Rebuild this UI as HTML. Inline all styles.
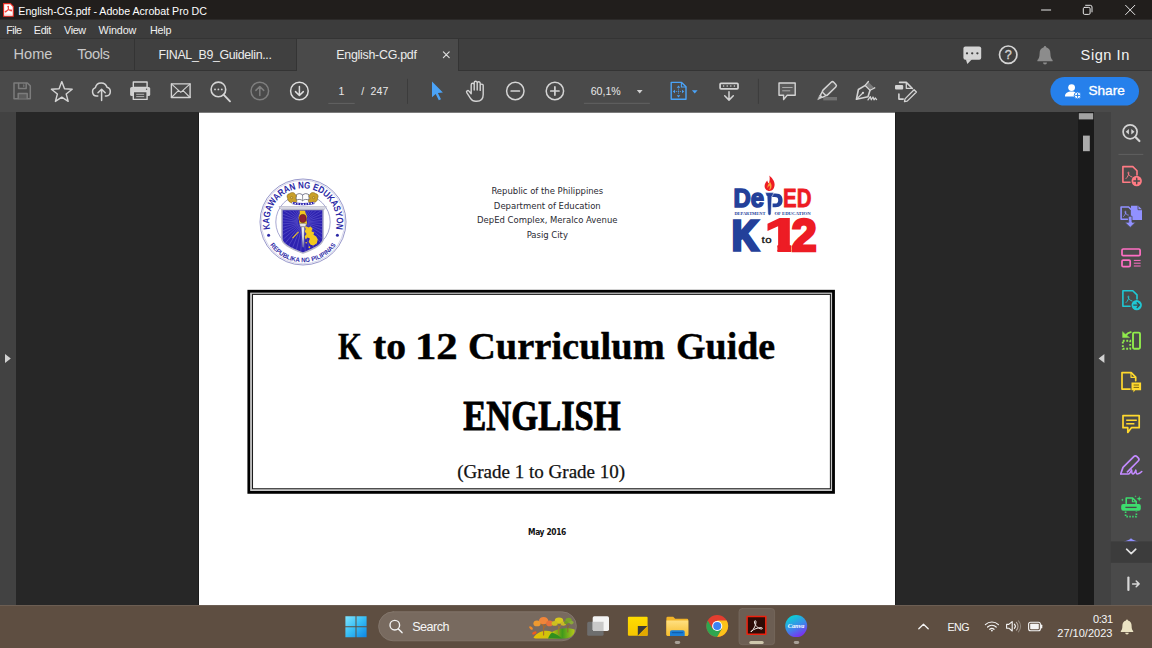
<!DOCTYPE html>
<html lang="en"><head><meta charset="utf-8"><title>English-CG.pdf - Adobe Acrobat Pro DC</title>
<style>
*{box-sizing:border-box;margin:0;padding:0}
html,body{width:1152px;height:648px;overflow:hidden;background:#282828}
body{position:relative;font-family:"Liberation Sans",sans-serif;color:#e6e6e6}
.abs{position:absolute}
.t{position:absolute;white-space:nowrap;line-height:1}
svg{position:absolute;overflow:visible}
/* title bar */
#titlebar{left:0;top:0;width:1152px;height:20px;background:#211e1c;border-bottom:1px solid #2c2a29}
#menubar{left:0;top:20px;width:1152px;height:18px;background:#3c3c3c}
#tabrow{left:0;top:38px;width:1152px;height:33px;background:#404040;border-top:1px solid #343434;border-bottom:1px solid #343434}
#toolbar{left:0;top:71px;width:1152px;height:41px;background:#4a4a4a}
#docbg{left:0;top:112px;width:1152px;height:493px;background:#272727}
#leftstrip{left:0;top:112px;width:16px;height:493px;background:#424242}
#page{left:199px;top:112.7px;width:696px;height:492px;background:#fff;box-shadow:-1px 0 0 #1c1c1c,1px 0 0 #1c1c1c}
#scroll{left:1078px;top:112px;width:16px;height:493px;background:#1a1a1a}
#rstrip{left:1094px;top:112px;width:17px;height:493px;background:#424242}
#rpanel{left:1111px;top:112px;width:41px;height:493px;background:#4a4a4a}
#taskbar{left:0;top:605px;width:1152px;height:43px;background:#5e4e41}

#titletext{left:18.3px;top:5.9px;font-size:10.65px;color:#fff}
.menu{top:24.5px;font-size:10.8px;color:#f0f0f0}
.nav{top:46.5px;font-size:14.6px;color:#c9c9c9}
.tabtxt{top:48.6px;font-size:12.4px;color:#ececec}
#tab1{left:134px;top:39px;width:163px;height:31px;background:#404040;border-left:1px solid #343434;border-right:1px solid #343434}
#tab2{left:297px;top:39px;width:161px;height:32px;background:#4a4a4a}
#tabrest{left:458px;top:39px;width:694px;height:31px;background:#3f3f3f;border-left:1px solid #343434}
.tb{top:85.5px;font-size:10.6px;color:#e8e8e8}

.doc{font-family:"DejaVu Sans Condensed","DejaVu Sans",sans-serif;font-stretch:condensed;color:#2a2a32;font-size:9.42px;text-align:center;width:300px;left:397.3px}
#boxo{left:247.5px;top:290px;width:587.5px;height:203.5px;border:2.8px solid #000}
#boxi{left:251.8px;top:294px;width:579px;height:195.3px;border:1px solid #222}
.ser{font-family:"Liberation Serif",serif;color:#000;text-align:center;left:199px;width:696px}
#t1{top:327px;left:0;width:1152px;height:40px;font-size:38.5px;font-weight:bold;-webkit-text-stroke:.45px #000;text-align:left}
#t1 .w{position:absolute;top:0;transform-origin:0 0;white-space:nowrap}
#t2{top:394.5px;left:193.5px;font-size:42px;font-weight:bold;transform:scaleX(.822);transform-origin:348px 0;-webkit-text-stroke:.9px #000}
#t3{top:462.3px;left:193.2px;font-size:19.05px;color:#111;-webkit-text-stroke:.25px #111}
#may{font-family:"DejaVu Sans Condensed","DejaVu Sans",sans-serif;font-stretch:condensed;font-weight:bold;font-size:8.4px;color:#111;left:447px;width:200px;text-align:center;top:527.5px;letter-spacing:-.35px}

#signin{left:1080.6px;top:48.2px;font-size:14.6px;color:#f4f4f4;letter-spacing:.55px}
#share{left:1088.4px;top:84.1px;font-size:13.6px;color:#fff;-webkit-text-stroke:.35px #fff;letter-spacing:.05px;z-index:3}
.tk{color:#f6f6f6}
</style></head><body>
<div id="titlebar" class="abs"></div>
<div id="menubar" class="abs"></div>
<div id="tabrow" class="abs"></div>
<div id="toolbar" class="abs"></div>
<div id="docbg" class="abs"></div>
<div id="leftstrip" class="abs"></div>
<div class="abs" style="left:199px;top:112px;width:696px;height:1px;background:#7c7c7c"></div><div id="page" class="abs"></div>

<div class="t doc" style="top:186.2px">Republic of the Philippines</div>
<div class="t doc" style="top:200.7px">Department of Education</div>
<div class="t doc" style="top:215.1px">DepEd Complex, Meralco Avenue</div>
<div class="t doc" style="top:229.5px">Pasig City</div>
<svg id="seal" width="100" height="100" viewBox="253 171.8 100 100" style="left:253px;top:171.8px" fill="none">
<defs><path id="arcT" d="M271.43 233.29A33.6 33.6 0 1 1 334.57 233.29"/><path id="arcB" d="M268.10 241.95A40.3 40.3 0 0 0 337.90 241.95"/>
<clipPath id="shc"><path d="M282.7 210.2H322.3V238.6C322.3 244 312.2 248.8 302.9 252.1C293.6 248.8 282.7 244 282.7 238.6Z"/></clipPath></defs>
<circle cx="303.0" cy="221.8" r="43" fill="#fff" stroke="#6d6db4" stroke-width=".7"/>
<circle cx="303.0" cy="221.8" r="41.7" stroke="#9a9acc" stroke-width=".4"/>
<circle cx="303.0" cy="221.8" r="27.2" stroke="#6d6db4" stroke-width=".6"/>
<text font-family="Liberation Sans, sans-serif" font-weight="bold" font-size="9.5" fill="#2b29a6"><textPath href="#arcT" startOffset="50%" text-anchor="middle" textLength="120" lengthAdjust="spacingAndGlyphs">KAGAWARAN NG EDUKASYON</textPath></text>
<text font-family="Liberation Sans, sans-serif" font-weight="bold" font-size="6.4" fill="#2b29a6"><textPath href="#arcB" startOffset="50%" text-anchor="middle" textLength="77" lengthAdjust="spacingAndGlyphs">REPUBLIKA NG PILIPINAS</textPath></text>
<circle cx="268.6" cy="235.0" r="1.5" fill="#2b29a6"/><circle cx="337.4" cy="235.0" r="1.5" fill="#2b29a6"/>
<!-- shield -->
<path d="M279 206.4H326.4L324.2 209.4H281.2Z" fill="#dcdce6" stroke="#9c9cb4" stroke-width=".5" stroke-linejoin="round"/>
<path d="M281.9 209.4H323.1V238.6C323.1 244.6 312.6 249.4 302.9 252.9C293.2 249.4 281.9 244.6 281.9 238.6Z" fill="#2d22b0" stroke="#b4b4c8" stroke-width="1.5" stroke-linejoin="round"/>
<g clip-path="url(#shc)"><path d="M307.8 222.3L338.7 224.5M307.7 223.1L337.9 230.1M307.4 223.9L336.2 235.5M307.1 224.6L333.7 240.5M306.6 225.2L330.4 245.1M306.1 225.8L326.4 249.2M305.4 226.2L321.9 252.5M304.8 226.6L316.9 255.1M304.0 226.9L311.5 256.9M303.2 227.0L305.9 257.9M302.5 227.0L300.3 257.9M301.7 226.9L294.7 257.1M300.9 226.6L289.3 255.4M300.2 226.3L284.3 252.9M299.6 225.8L279.7 249.6M299.0 225.3L275.6 245.6M298.6 224.6L272.3 241.1M298.2 224.0L269.7 236.1M297.9 223.2L267.9 230.7M297.8 222.4L266.9 225.1M297.8 221.7L266.9 219.5M297.9 220.9L267.7 213.9M298.2 220.1L269.4 208.5M298.5 219.4L271.9 203.5M299.0 218.8L275.2 198.9M299.5 218.2L279.2 194.8M300.2 217.8L283.7 191.5M300.8 217.4L288.7 188.9M301.6 217.1L294.1 187.1M302.4 217.0L299.7 186.1M303.1 217.0L305.3 186.1M303.9 217.1L310.9 186.9M304.7 217.4L316.3 188.6M305.4 217.7L321.3 191.1M306.0 218.2L325.9 194.4M306.6 218.7L330.0 198.4M307.0 219.4L333.3 202.9M307.4 220.0L335.9 207.9M307.7 220.8L337.7 213.3M307.8 221.6L338.7 218.9" stroke="#7d76de" stroke-width=".4"/>
<path d="M299.6 209.8H304.8L305.6 213L307 216L306.4 220L307.2 223.4L305.8 226L308.6 227.4L310.6 226.4L312.6 228.6L311.4 231L314.2 232.4L313.4 234.6L316.2 236.2L317.8 239.4L316.8 243L313.6 245.4L310.6 244.6L308.6 241.6L310 238.4L307.4 237.4L305.6 239.2L304.6 236.2L306.6 233.8L304.8 231.4L305.8 228.6L304.2 226.6H300.6L299.2 222L298.6 217L299.8 213.4Z" fill="#f2c81e"/>
<path d="M298.2 231.2L298.9 232L292.9 238.2L292.1 237.6Z" fill="#f2c81e"/>
<circle cx="309.4" cy="247" r=".9" fill="#f2c81e"/><circle cx="306.2" cy="242.6" r=".8" fill="#f2c81e"/>
</g>
<path d="M299.3 223.2H306.4L305.4 226.6H300.3Z" fill="#e4e4ec" stroke="#4e4e70" stroke-width=".4"/>
<path d="M301.2 226.6H304.6L303.5 246.4Q303.1 248 302.7 246.4Z" fill="#ededf2" stroke="#4e4e70" stroke-width=".4"/>
<ellipse cx="302.8" cy="218.3" rx="3.4" ry="4.1" fill="#8e2230" stroke="#3e1018" stroke-width=".5"/>
<!-- book, dolphins, rope --><g transform="translate(0 2)">
<path d="M296.2 198V192.6C298.6 190.8 301.2 191.2 302.6 193C304 191.2 306.6 190.8 309 192.6V198C306.6 196.8 304 197 302.6 198.6C301.2 197 298.6 196.8 296.2 198Z" fill="#fff" stroke="#333348" stroke-width=".6" stroke-linejoin="round"/>
<path d="M302.6 193V198.6" stroke="#333348" stroke-width=".5"/>
<g fill="#c9a02a" stroke="#6e5212" stroke-width=".45" stroke-linejoin="round">
<path d="M296.2 200.4C291.6 201.6 287.4 199.6 287.6 196C286.4 194.4 287.2 191.6 289.6 191.4C291.2 189.8 294.6 190 295.4 192.4C296.8 193.2 296.6 195.2 295 195.8C296.4 197 297.4 199 296.2 200.4Z"/>
<path d="M309 200.4C313.6 201.6 317.8 199.6 317.6 196C318.8 194.4 318 191.6 315.6 191.4C314 189.8 310.6 190 309.8 192.4C308.4 193.2 308.6 195.2 310.2 195.8C308.8 197 307.8 199 309 200.4Z"/>
</g>
<circle cx="291.6" cy="195.4" r="1.1" fill="#e2c060" stroke="#6e5212" stroke-width=".4"/><circle cx="313.6" cy="195.4" r="1.1" fill="#e2c060" stroke="#6e5212" stroke-width=".4"/>
<path d="M292 200.6Q303 203.4 314.4 200.6" stroke="#2a20b2" stroke-width="2.3"/>
<path d="M292 200.6Q303 203.4 314.4 200.6" stroke="#fff" stroke-width="1.4" stroke-dasharray="1.2 1.5"/>
</g>
</svg>
<svg id="deped" width="100" height="90" viewBox="725 170 100 90" style="left:725px;top:170px" fill="none">
<text x="733.6" y="207.2" font-family="Liberation Sans, sans-serif" font-weight="bold" font-size="26" fill="#23409a" stroke="#23409a" stroke-width="1.5" textLength="30.6" lengthAdjust="spacingAndGlyphs">De</text>
<path d="M772 193.4H775.4C781.6 193.4 782.6 197 782.6 200.2C782.6 204.2 780.6 207.2 775.6 207.2H772.6V203.6H774.8C777.4 203.6 778.2 202.2 778.2 200.2C778.2 198.2 777.4 197 774.8 197H772Z" fill="#23409a"/>
<text x="783" y="207.2" font-family="Liberation Sans, sans-serif" font-weight="bold" font-size="26.5" fill="#ed1c24" stroke="#ed1c24" stroke-width=".8" textLength="28.4" lengthAdjust="spacingAndGlyphs">ED</text>
<!-- torch -->
<path d="M765.4 192.6H773.6L772.6 196H771.9L771 214.6Q769.5 216 768 214.6L767.1 196H766.4Z" fill="#23409a" stroke="#fff" stroke-width=".5"/>
<path d="M769.3 175.6C771.8 178 774.6 180.6 774.6 184.6C774.6 188.4 772.4 191 769.6 191C766.6 191 764.6 188.8 764.6 186C764.6 183.6 766 182 767.2 180.4C767.6 182 768.2 182.8 768.8 183.2C769.8 181 770 178.4 769.3 175.6Z" fill="#ed1c24"/>
<path d="M769.6 181.6C771 183.4 772 185 771.4 187.4C771 188.8 770 189.8 769 189.8C770 188.4 770.2 187 769.4 185.6C768.8 186.6 768 187.2 767.6 188.2C767.2 186.4 767.8 185 768.6 184C769.2 183.2 769.6 182.6 769.6 181.6Z" fill="#f8a13a"/>
<text x="734.4" y="214.7" font-family="Liberation Serif, serif" font-weight="bold" font-size="4.3" fill="#23409a" textLength="31" lengthAdjust="spacingAndGlyphs">DEPARTMENT</text>
<text x="774.4" y="214.7" font-family="Liberation Serif, serif" font-weight="bold" font-size="4.3" fill="#23409a" textLength="36.2" lengthAdjust="spacingAndGlyphs">OF EDUCATION</text>
<text x="731.9" y="250.2" font-family="Liberation Sans, sans-serif" font-weight="bold" font-size="42.6" fill="#23409a" stroke="#23409a" stroke-width="3.6" stroke-linejoin="miter" textLength="26.2" lengthAdjust="spacingAndGlyphs">K</text>
<text x="761.6" y="243" font-family="Liberation Serif, serif" font-size="10.8" fill="#111" stroke="#111" stroke-width=".3" textLength="10" lengthAdjust="spacingAndGlyphs">to</text>
<clipPath id="c1"><path d="M760 210H791.2V254H777.4V243H760Z"/></clipPath><g clip-path="url(#c1)"><text transform="translate(764.6 250.6) scale(1.42 1)" font-family="Liberation Sans, sans-serif" font-weight="bold" font-size="45.4" fill="#ed1c24" stroke="#ed1c24" stroke-width="2" stroke-linejoin="miter">1</text></g><text x="791.6" y="250.6" font-family="Liberation Sans, sans-serif" font-weight="bold" font-size="45.4" fill="#ed1c24" stroke="#ed1c24" stroke-width="2.6" stroke-linejoin="miter">2</text>
</svg>
<svg id="box" width="600" height="215" viewBox="240 284 600 215" style="left:240px;top:284px" fill="none"><rect x="251.4" y="293.5" width="580.1" height="196.5" stroke="#c4c4c4" stroke-width="1.3"/><rect x="248.85" y="291.25" width="584.65" height="201.1" stroke="#000" stroke-width="2.85"/><rect x="252.5" y="294.4" width="577.9" height="194.35" stroke="#1c1c1c" stroke-width="1.05"/></svg>
<div id="t1" class="t ser"><span class="w" id="w0" style="left:338px;transform:scaleX(.8)">K</span><span class="w" id="w1" style="left:372.6px;transform:scaleX(1.03)">to</span><span class="w" id="w2" style="left:414.8px;transform:scaleX(1.11)">12</span><span class="w" id="w3" style="left:468px">Curriculum</span><span class="w" id="w4" style="left:675.6px;transform:scaleX(.986)">Guide</span></div>
<div id="t2" class="t ser">ENGLISH</div>
<div id="t3" class="t ser">(Grade 1 to Grade 10)</div>
<div id="may" class="t">May 2016</div>
<div id="scroll" class="abs"></div>
<div id="rstrip" class="abs"></div>
<div id="rpanel" class="abs"></div>
<div id="taskbar" class="abs"></div>

<div id="titletext" class="t">English-CG.pdf - Adobe Acrobat Pro DC</div>
<div class="t menu" style="left:6.2px;letter-spacing:-.5px">File</div>
<div class="t menu" style="left:33.8px;letter-spacing:-.35px">Edit</div>
<div class="t menu" style="left:64px;letter-spacing:-.35px">View</div>
<div class="t menu" style="left:98.6px;letter-spacing:-.12px">Window</div>
<div class="t menu" style="left:150px;letter-spacing:-.25px">Help</div>
<div id="tab1" class="abs"></div>
<div id="tab2" class="abs"></div>
<div id="tabrest" class="abs"></div>
<div class="t nav" style="left:13.5px">Home</div>
<div class="t nav" style="left:77.3px;letter-spacing:-.38px">Tools</div>
<div class="t tabtxt" style="left:158.5px;letter-spacing:-.34px">FINAL_B9_Guidelin...</div>
<div class="t tabtxt" style="left:336.3px;letter-spacing:-.26px">English-CG.pdf</div>
<div class="t tb" id="pg1" style="left:338.4px">1</div>
<div class="t tb" id="pg2" style="left:361.2px">/</div><div class="t tb" id="pg3" style="left:370.4px;letter-spacing:.15px">247</div>
<div class="t tb" id="zoomtxt" style="left:590.7px">60,1%</div>
<svg id="ui" width="1152" height="648" viewBox="0 0 1152 648" style="left:0;top:0" fill="none" stroke-linecap="round" stroke-linejoin="round">
<!-- title icon -->
<g>
<path d="M3.6 3.6H10.4L13.3 6.5V16.2H3.6Z" fill="#fff" stroke="#e42a20" stroke-width="1.1" stroke-linejoin="miter"/>
<path d="M8.2 6.6C8.6 8 8.4 9 8.2 9.6C7.4 10.6 6.6 11.2 5.6 11.6M8.2 9.6C9.2 10.2 10.2 10.4 11.2 10.4" stroke="#f2433b" stroke-width="1.2"/>
<circle cx="8.2" cy="6.6" r=".8" fill="#f2433b"/><circle cx="5.6" cy="11.6" r=".95" fill="#f2433b"/><circle cx="11.2" cy="10.5" r=".9" fill="#f2433b"/>
<path d="M5.4 14.3H11.4" stroke="#f7c9c6" stroke-width=".7"/>
</g>
<!-- window controls -->
<g stroke="#e6e6e6" stroke-width="1">
<path d="M1041.5 10H1050.7"/>
<rect x="1083.3" y="7.4" width="6.8" height="7" rx="1.3"/>
<path d="M1085.6 5.3H1090.3Q1092 5.3 1092 7V11.9"/>
<path d="M1125.6 5.3L1134.8 14.6M1134.8 5.3L1125.6 14.6"/>
</g>
<path d="M443.4 51.9L449.2 57.7M449.2 51.9L443.4 57.7" stroke="#dcdcdc" stroke-width="1.2"/>
<!-- toolbar: save (disabled) -->
<g stroke="#7c7c7c" stroke-width="1.5">
<path d="M14 83H27.4L30.3 85.9V98.8H14Z"/>
<path d="M18.6 83.4V88.4H26.2V83.4" />
<path d="M23.8 84.8V86.6" stroke-width="1.1"/>
<path d="M18.2 98.6V93.6H27.2V98.6" fill="#5c5c5c"/>
</g>
<!-- star -->
<path id="star" stroke="#d4d4d4" stroke-width="1.4" d="M61.8 81.6L64.5 88.8L72.2 89.2L66.2 94L68.2 101.4L61.8 97.2L55.4 101.4L57.4 94L51.4 89.2L59.1 88.8Z"/>
<!-- cloud upload -->
<g stroke="#d4d4d4" stroke-width="1.5">
<path d="M97.8 96.1H96.6A4.4 4.4 0 0 1 95.4 87.6A6 6 0 0 1 107 87.3A4.5 4.5 0 0 1 106.4 96.1H105.4"/>
<path d="M101.6 100.4V89.8M98 92.8L101.6 89.2L105.2 92.8"/>
</g>
<!-- printer -->
<g>
<rect x="130.1" y="87" width="20.1" height="9" rx="1.6" fill="#cfcfcf"/>
<rect x="133.3" y="82" width="13.8" height="5.4" stroke="#d4d4d4" stroke-width="1.4"/>
<rect x="133.3" y="91.6" width="13.8" height="7.8" fill="#4a4a4a" stroke="#d4d4d4" stroke-width="1.4"/>
<path d="M136.6 94.3H143.8M136.6 96.6H143.8" stroke="#bdbdbd" stroke-width=".9"/>
<circle cx="146.6" cy="89.3" r=".7" fill="#555"/>
</g>
<!-- mail -->
<g stroke="#d4d4d4" stroke-width="1.4">
<rect x="171.4" y="83.9" width="18.7" height="13.6"/>
<path d="M171.4 83.9L180.75 92.3L190.1 83.9M171.4 97.5L178.6 90.4M190.1 97.5L182.9 90.4" stroke-width="1.1"/>
</g>
<!-- search -->
<g stroke="#d4d4d4">
<circle cx="218.4" cy="89.4" r="7.3" stroke-width="1.6"/>
<path d="M223.8 94.8L230 101.3" stroke-width="1.9"/>
<g fill="#d4d4d4" stroke="none"><circle cx="215" cy="89.4" r=".9"/><circle cx="218.4" cy="89.4" r=".9"/><circle cx="221.8" cy="89.4" r=".9"/></g>
</g>
<!-- up (disabled) / down -->
<g stroke="#7e7e7e" stroke-width="1.5"><circle cx="259.8" cy="91" r="8.8"/><path d="M259.8 95.6V86.8M255.9 90.4L259.8 86.5L263.7 90.4"/></g>
<g stroke="#dedede" stroke-width="1.5"><circle cx="299.4" cy="91" r="8.8"/><path d="M299.4 86.4V95.2M295.5 91.6L299.4 95.5L303.3 91.6"/></g>
<!-- page field underline, separators -->
<path d="M328.3 103.4H354.7" stroke="#626262" stroke-width="1" stroke-linecap="butt"/>
<path d="M407.5 78.8V103.8M758.4 78.8V103.8" stroke="#3c3c3c" stroke-width="1" stroke-linecap="butt"/>
<!-- pointer -->
<path d="M432 81.6V97.3L435.7 94L438.8 100.3L441 99.2L437.9 93L442.9 92.6Z" fill="#4ba3f7"/>
<!-- hand -->
<path stroke="#d4d4d4" stroke-width="1.4" d="M471.2 93.4V84.7a1.5 1.5 0 0 1 3 0V90M474.2 90V82.8a1.5 1.5 0 0 1 3 0V90M477.2 90V83.3a1.5 1.5 0 0 1 3 0V90.4M480.2 90.4V85.6a1.5 1.5 0 0 1 3 0V94.4c0 4.4-2.6 6.8-6.6 6.8h-1c-2.4 0-3.9-1.1-5.1-2.9l-3.7-5.7c-.9-1.5 1-2.8 2.2-1.5l2.2 2.7"/>
<!-- minus / plus -->
<g stroke="#d4d4d4" stroke-width="1.5"><circle cx="515.3" cy="91" r="8.7"/><path d="M511.2 91H519.4" stroke-width="1.7"/></g>
<g stroke="#d4d4d4" stroke-width="1.5"><circle cx="554.9" cy="91" r="8.7"/><path d="M550.8 91H559M554.9 86.9V95.1" stroke-width="1.7"/></g>
<!-- zoom field -->
<path d="M583.9 103.3H649.9" stroke="#626262" stroke-width="1" stroke-linecap="butt"/>
<path d="M636.8 89.9H642.6L639.7 93.4Z" fill="#d0d0d0"/>
<!-- fit page (blue) -->
<g stroke="#4ba3f7" stroke-width="1.4">
<path d="M671.2 82.4H681.6L686 86.8V99.3H671.2Z"/>
<path d="M681.4 82.6V87H685.8" stroke-width="1.1"/>
<g fill="#4ba3f7" stroke="none"><path d="M678.5 85.6L680.3 87.8H676.7ZM678.5 97.4L680.3 95.2H676.7ZM672.8 91.5L675 89.7V93.3ZM684.2 91.5L682 89.7V93.3Z"/></g>
<path d="M678.5 88.6V94.4M675.8 91.5H681.2" stroke-width=".9" stroke-dasharray="1 1" stroke-linecap="butt"/>
</g>
<path d="M691.9 90.2H697.6L694.75 93.4Z" fill="#4ba3f7"/>
<!-- keyboard down -->
<g stroke="#d4d4d4" stroke-width="1.4">
<rect x="720.1" y="83.4" width="17.9" height="5.4" rx=".9" stroke-width="1.7"/>
<path d="M729 91.8V99.8M724.7 95.8L729 100.1L733.3 95.8" stroke-width="1.5"/>
<g fill="#d4d4d4" stroke="none"><circle cx="723.6" cy="86.1" r=".75"/><circle cx="727.2" cy="86.1" r=".75"/><circle cx="730.8" cy="86.1" r=".75"/><circle cx="734.4" cy="86.1" r=".75"/></g>
</g>
<!-- comment -->
<g stroke="#d4d4d4" stroke-width="1.4">
<path d="M779 83H795.2V95.3H787.2L783.6 99.6V95.3H779Z" fill="#5b5b5b"/>
<path d="M782.2 87.5H792.6M782.2 90.8H790.2" stroke="#a8a8a8" stroke-width="1" stroke-linecap="butt"/>
</g>
<!-- highlighter -->
<g>
<rect x="823.3" y="97" width="13.7" height="3.4" fill="#727272"/>
<g transform="translate(-1.2 .9) rotate(46 828 90)" stroke="#d4d4d4" stroke-width="1.5">
<rect x="824.8" y="79" width="6.6" height="15" rx="1.8" fill="#5b5b5b"/>
<path d="M825.6 94.4L826.8 97.8H829.4L830.6 94.4" />
<path d="M826.6 98H829.6L828.1 102.2Z" fill="#d4d4d4" stroke-width=".6"/>
</g>
</g>
<!-- sign icon -->
<g stroke="#d4d4d4" stroke-width="1.6">
<path d="M856.4 99.3L858.4 89.5L865.3 85.4L870.1 90.1L868 96.7Z"/>
<path d="M856.8 98.9L862.6 93.2" stroke-width="1.2"/>
<circle cx="863" cy="92.8" r="1.15" fill="#d4d4d4" stroke="none"/>
<path d="M865.3 85.4L868.3 81.7M870.1 90.1L874.6 87.9"/>
<path d="M868.8 82.4L874 87.6L870.2 89.4L866 85.2Z" fill="#7a7a7a" stroke="none"/>
<path d="M868 99.9L870.3 96.6L871.3 99.8L873 97L874 99.8L875.4 98L876.6 99.6" stroke-width="1.25"/>
</g>
<!-- edit pdf -->
<g stroke="#d4d4d4" stroke-width="1.6">
<path d="M899.6 82.4H906.3L912.4 88.5"/>
<path d="M906.3 82.6V88.3H912" stroke-width="1.3"/>
<path d="M898.9 94V99.1H903.2"/>
<rect x="895" y="85" width="8.2" height="4.5" rx="1.1" fill="#d4d4d4" stroke="none"/>
<path d="M914.1 89.7L916.4 92L907.2 101.1L904.5 101.6L905 98.9Z" stroke-width="1.3"/>
</g>
<!-- chat -->
<g>
<rect x="963.4" y="46.5" width="17.8" height="13.3" rx="2" fill="#d4d4d4"/>
<path d="M965.8 59.3L967.3 64L972 59.3Z" fill="#d4d4d4"/>
<g fill="#3e3e3e"><circle cx="967" cy="53.3" r="1.15"/><circle cx="972.2" cy="53.3" r="1.15"/><circle cx="977.4" cy="53.3" r="1.15"/></g>
</g>
<!-- help -->
<circle cx="1008.2" cy="54.7" r="8.7" stroke="#d4d4d4" stroke-width="1.7"/>
<text x="1008.2" y="59.2" text-anchor="middle" font-family="Liberation Sans, sans-serif" font-size="12.6" fill="#d4d4d4" stroke="#d4d4d4" stroke-width=".35">?</text>
<!-- bell -->
<g fill="#8c8c8c">
<path d="M1045 46A1.2 1.2 0 0 1 1046.2 47.2C1049.2 48 1050.4 50.4 1050.4 53.4C1050.4 57.4 1051.4 58.8 1052.6 60V61.2H1037.4V60C1038.6 58.8 1039.6 57.4 1039.6 53.4C1039.6 50.4 1040.8 48 1043.8 47.2A1.2 1.2 0 0 1 1045 46Z"/>
<path d="M1043 62.4H1047A2 2 0 0 1 1043 62.4Z"/>
</g>
<!-- share button -->
<rect x="1050.4" y="77" width="88.6" height="28.6" rx="14.3" fill="#2680eb"/>
<g fill="#fff">
<circle cx="1071.6" cy="87.6" r="3.4"/>
<path d="M1065 96.6C1065 93.4 1067.6 91.6 1071.6 91.6C1073.6 91.6 1075 92 1076 92.8A4.4 4.4 0 0 0 1074 96.6Z"/>
<circle cx="1077.6" cy="95.4" r="3.4" stroke="#2680eb" stroke-width=".9"/>
<path d="M1077.6 93.4V97.4M1075.6 95.4H1079.6" stroke="#2680eb" stroke-width="1"/>
</g>
<!-- right panel: search -->
<g stroke="#d4d4d4">
<circle cx="1130.1" cy="131.8" r="7" stroke-width="1.7"/>
<path d="M1135.4 137L1139.4 141" stroke-width="2.2"/>
<path d="M1125.7 131.8L1128.9 129V134.6ZM1134.5 131.8L1131.3 129V134.6Z" fill="#d4d4d4" stroke="none"/>
</g>
<path d="M1118.5 154.4H1143.3" stroke="#606060" stroke-width="1" stroke-linecap="butt"/>
<!-- create pdf -->
<g stroke="#ff7b84" stroke-width="1.6">
<path d="M1130 182.2H1122.9V166.6H1132.8L1137 170.8V175"/>
<path d="M1126 178.6C1127.6 177.2 1128.8 174.8 1128.8 172.6C1128.8 171.8 1128 171.8 1128 172.6C1128 174.4 1130 176.6 1132 177" stroke-width=".9"/>
<circle cx="1136.7" cy="181" r="5.2" fill="#ff7b84" stroke="none"/>
<path d="M1136.7 178.2V183.8M1133.9 181H1139.5" stroke="#4a4a4a" stroke-width="1.5"/>
</g>
<!-- combine -->
<g stroke="#9191ff" stroke-width="1.6">
<path d="M1131 205.7H1138.2L1142 209.5V219.9H1131Z" fill="#9191ff" stroke="none"/>
<path d="M1138 205.9V209.7H1141.8" stroke="#4a4a4a" stroke-width=".9"/>
<path d="M1121.1 207H1128.6L1131.6 210V219.2H1121.1Z" fill="#4a4a4a"/>
<path d="M1123.6 216.4C1124.8 215.2 1125.8 213.4 1125.8 211.8C1125.8 211 1125 211 1125 211.8C1125 213.2 1126.8 215 1128.4 215.2" stroke-width=".9"/>
<path d="M1128.4 216.2H1132V222.2H1135.6L1130.2 227.4L1124.8 222.2H1128.4Z" fill="#9191ff" stroke="#4a4a4a" stroke-width=".8"/>
</g>
<!-- organize -->
<g stroke="#ff6fc4" stroke-width="1.7">
<rect x="1122" y="249" width="18.1" height="6.6" rx="1.2"/>
<rect x="1122" y="260.1" width="8.2" height="6.6" rx="1.2"/>
<path d="M1133.8 260.4H1140.6M1133.8 263.2H1140.6M1133.8 266H1140.6" stroke-width="1" stroke-linecap="butt"/>
</g>
<!-- export pdf -->
<g stroke="#1fc8d4" stroke-width="1.6">
<path d="M1130 306.2H1122.9V290.7H1132.8L1137 294.9V299"/>
<path d="M1126 302.6C1127.6 301.2 1128.8 298.8 1128.8 296.6C1128.8 295.8 1128 295.8 1128 296.6C1128 298.4 1130 300.6 1132 301" stroke-width=".9"/>
<circle cx="1136.7" cy="305.1" r="5.2" fill="#1fc8d4" stroke="none"/>
<path d="M1133.8 305.1H1139.2M1137.2 302.8L1139.5 305.1L1137.2 307.4" stroke="#3a4a4c" stroke-width="1.4"/>
</g>
<!-- compress -->
<g stroke="#90ea4c" stroke-width="1.9">
<rect x="1133" y="332.6" width="7" height="16.2" rx="1.2"/>
<path d="M1122.8 340.8H1130.2V348.8H1122.8Z" stroke-dasharray="1.9 1.6" stroke-linecap="butt" stroke-linejoin="miter"/>
<path d="M1130.8 332.2Q1127.6 332.8 1125.6 335.6" stroke-width="1.8"/>
<path d="M1122.6 332V337.6H1129.2Z" fill="#90ea4c" stroke-width=".5"/>
</g>
<!-- request (yellow) -->
<g stroke="#ffd92e" stroke-width="1.7">
<path d="M1130 389.1H1122V372.6H1131.2L1135.7 377.1V380.6"/>
<path d="M1131 372.9V377.3H1135.4" stroke-width="1.2"/>
<path d="M1131.5 382.4H1141.1V390.2H1135.2L1133.4 392.4V390.2H1131.5Z" fill="#ffd92e" stroke="none"/>
<path d="M1133.6 385H1139M1133.6 387.4H1139" stroke="#5a4a10" stroke-width=".8" stroke-linecap="butt"/>
</g>
<!-- comment (yellow) -->
<g stroke="#ffd92e" stroke-width="1.7">
<path d="M1123 415.6H1139.2V427.7H1131.4L1127.8 432.4V427.7H1123Z"/>
<path d="M1126.2 420.3H1136.8M1126.2 423.7H1134.4" stroke-width="1.4" stroke-linecap="butt"/>
</g>
<!-- fill & sign -->
<g stroke="#c38bff" stroke-width="1.7">
<path d="M1120.8 473.8L1123 467.4L1133.8 456.6A2.3 2.3 0 0 1 1137 456.6L1138.2 457.8A2.3 2.3 0 0 1 1138.2 461L1127.4 471.8"/>
<path d="M1120.8 473.9H1128.4C1129.8 473.9 1131 471.4 1131.6 469.9C1132.1 471.4 1131.3 473.9 1133 473.9C1134.4 473.9 1135.2 471.6 1135.8 470.1C1136.3 471.6 1135.6 473.9 1137.4 473.9C1139 473.9 1140.6 472.8 1141.8 471.5" stroke-width="1.5"/>
</g>
<!-- print production -->
<g stroke="#3ddc6e" stroke-width="1.6">
<path d="M1126.2 503.6V498H1132.6L1136.2 501.6V503.6"/>
<path d="M1132.4 498.2V501.8H1136" stroke-width="1.1"/>
<rect x="1121.2" y="504" width="19.6" height="6.8" rx="2" fill="#3ddc6e" stroke="none"/>
<path d="M1125.4 507.4H1136.6" stroke="#4a4a4a" stroke-width="1.3" stroke-linecap="butt"/>
<path d="M1125.6 511.6V516.6H1136.4V511.6" stroke-dasharray="1.5 1.4" stroke-linecap="butt" stroke-width="1.7"/>
<path d="M1139.2 496L1139.9 498L1141.9 498.7L1139.9 499.4L1139.2 501.4L1138.5 499.4L1136.5 498.7L1138.5 498Z" fill="#3ddc6e" stroke="none"/>
<path d="M1122.4 498.4L1122.8 499.5L1123.9 499.9L1122.8 500.3L1122.4 501.4L1122 500.3L1120.9 499.9L1122 499.5Z" fill="#3ddc6e" stroke="none"/>
<path d="M1135.6 495.2L1135.9 496L1136.7 496.3L1135.9 496.6L1135.6 497.4L1135.3 496.6L1134.5 496.3L1135.3 496Z" fill="#3ddc6e" stroke="none"/>
</g>
<!-- peeking icon + more band -->
<path d="M1123.2 541.4C1127 541.2 1129 539.8 1131 538.2C1133 539.8 1135 541.2 1138.8 541.4Z" fill="#8f8fff"/>
<rect x="1110.8" y="541.4" width="41.2" height="21.4" fill="#3c3c3c"/>
<path d="M1126.6 549.2L1131.2 553.6L1135.8 549.2" stroke="#e2e2e2" stroke-width="1.6"/>
<!-- expand -->
<g stroke="#d8d8d8">
<path d="M1128.4 577.6V590" stroke-width="2.2"/>
<path d="M1132.6 583.9H1138.6M1136.2 581L1139.1 583.9L1136.2 586.8" stroke-width="1.5"/>
</g>
<!-- side triangles -->
<path d="M5 353.9V363.1L10.8 358.5Z" fill="#d2d2d2"/>
<path d="M1104.4 353.9V363.1L1098.6 358.5Z" fill="#d2d2d2"/>
<!-- scrollbar -->
<rect x="1078.8" y="113.2" width="14.4" height="6.2" fill="#a2a2a2"/>
<rect x="1083" y="135.6" width="6.8" height="15.6" fill="#ababab"/>
</svg>

<div id="signin" class="t">Sign In</div>
<div id="share" class="t">Share</div>
<svg id="tsk" width="1152" height="44" viewBox="0 604 1152 44" style="left:0;top:604px" fill="none" stroke-linecap="round" stroke-linejoin="round">
<defs>
<linearGradient id="gw" x1="0" y1="0" x2="1" y2="1"><stop offset="0" stop-color="#7fe4ff"/><stop offset=".5" stop-color="#35bdf5"/><stop offset="1" stop-color="#0c84e4"/></linearGradient>
<linearGradient id="gst" x1="0" y1="0" x2="0" y2="1"><stop offset="0" stop-color="#ffdd00"/><stop offset="1" stop-color="#f7c600"/></linearGradient>
<linearGradient id="gfo" x1="0" y1="0" x2="0" y2="1"><stop offset="0" stop-color="#ffe082"/><stop offset="1" stop-color="#f6bd2c"/></linearGradient>
<linearGradient id="gcv" x1=".25" y1="0" x2=".75" y2="1"><stop offset=".05" stop-color="#0ccfd6"/><stop offset=".5" stop-color="#3a8ce8"/><stop offset=".95" stop-color="#7c2ef0"/></linearGradient>
<linearGradient id="ggr" x1="0" y1="0" x2="1" y2="0"><stop offset="0" stop-color="#e8c000"/><stop offset=".45" stop-color="#c8c410"/><stop offset=".7" stop-color="#3f9a1c"/><stop offset="1" stop-color="#b8c818"/></linearGradient>
</defs>
<path d="M0 605.5H1152" stroke="#6c5e53" stroke-width="1" stroke-linecap="butt"/>
<!-- windows logo -->
<g fill="url(#gw)"><path d="M345.4 616.3H355.5V626.3H345.4ZM356.5 616.3H366.6V626.3H356.5ZM345.4 627.3H355.5V637.3H345.4ZM356.5 627.3H366.6V637.3H356.5Z"/></g>
<!-- search pill -->
<rect x="378.6" y="611.8" width="197.8" height="29" rx="14.5" fill="#786a5f" stroke="#877a70" stroke-width=".8"/>
<circle cx="394.8" cy="625.2" r="4.8" stroke="#f2f2f2" stroke-width="1.4"/>
<path d="M398.4 628.9L402 632.6" stroke="#f2f2f2" stroke-width="1.5"/>
<!-- trees -->
<g stroke="none">
<path d="M533.5 637.4C538 631 546 629 552 632C558 628 568 627 574.6 629.6C575.4 634 571 638.4 566 638.4H537C535 638.4 534 638 533.5 637.4Z" fill="url(#ggr)"/>
<path d="M552 632.4C556 634 560 636.4 562 638.4H548C549 636 550 634 552 632.4Z" fill="#2f8f1e"/>
<path d="M543.6 635V626L541 623.4M543.8 628L546.4 624.6" stroke="#a86a2c" stroke-width="1.1"/>
<path d="M558.8 634V626.4L556.6 624M559 628L561.2 625" stroke="#a8782c" stroke-width="1"/>
<path d="M567.8 632V625.6L566.4 624M567.9 627L569.4 625" stroke="#8a6a2c" stroke-width=".9"/>
<ellipse cx="543.6" cy="620.6" rx="4.6" ry="3.6" fill="#f0853a"/><ellipse cx="537" cy="623.4" rx="3.6" ry="2.9" fill="#ee9a30"/><ellipse cx="549.6" cy="623.4" rx="3.4" ry="2.8" fill="#e8703a"/>
<ellipse cx="559" cy="620.6" rx="4.2" ry="3.2" fill="#d8c81c"/><ellipse cx="554.6" cy="623.4" rx="3" ry="2.4" fill="#cdbf20"/><ellipse cx="563.4" cy="623.6" rx="2.8" ry="2.2" fill="#c8b828"/>
<ellipse cx="568.6" cy="620.4" rx="3.2" ry="2.6" fill="#7aa428"/><ellipse cx="571.4" cy="622.6" rx="2.2" ry="1.8" fill="#8aa838"/><ellipse cx="566" cy="622.6" rx="2" ry="1.6" fill="#6f9a24"/>
<ellipse cx="531" cy="628" rx="2.2" ry="1.2" transform="rotate(40 531 628)" fill="#f08a28"/>
<ellipse cx="534.4" cy="633" rx="2.4" ry="1.3" transform="rotate(-25 534.4 633)" fill="#ee5a20"/>
</g>
<!-- task view -->
<rect x="587.2" y="621.8" width="16.4" height="14" rx="1.6" fill="#6e6e6e"/>
<rect x="592.7" y="616.3" width="16.3" height="14.6" rx="1.6" fill="#f4f4f4"/>
<path d="M592.7 621.8H603.6V630.9H594.3Q592.7 630.9 592.7 629.3Z" fill="#c9c9c9"/>
<!-- sticky notes -->
<rect x="627.9" y="616.7" width="19.7" height="19.1" rx="1" fill="url(#gst)"/>
<path d="M637.8 626H647.6L637.8 635.8Z" fill="#3b3a38"/>
<path d="M647.6 626V635.8H637.8Z" fill="#e3a900"/>
<!-- explorer -->
<path d="M666.4 618.2Q666.4 616.8 667.8 616.8H673.2L675.2 618.8H687Q688.3 618.8 688.3 620.2V634.6Q688.3 636 687 636H667.8Q666.4 636 666.4 634.6Z" fill="#f2b427"/>
<path d="M666.4 620.4H688.3V634.6Q688.3 636 687 636H667.8Q666.4 636 666.4 634.6Z" fill="url(#gfo)"/>
<path d="M670 636V632Q670 630.2 671.8 630.2H683Q684.7 630.2 684.7 632V636Z" fill="#1b7fd6"/>
<path d="M672.4 632.6H682.4" stroke="#0f5fae" stroke-width="1.4"/>
<rect x="674.8" y="641" width="5.4" height="2.9" rx="1.45" fill="#a8a097"/>
<!-- chrome -->
<g>
<circle cx="717.2" cy="626" r="10.9" fill="#e33e2f"/>
<path d="M717.2 636.9A10.9 10.9 0 0 1 707.76 620.55L712.48 628.725L717.2 626L721.92 628.725Z" fill="#2ea650"/>
<path d="M726.64 620.55A10.9 10.9 0 0 1 717.2 636.9L721.92 628.725L717.2 626V620.55Z" fill="#fcc31a"/>
<circle cx="717.2" cy="626" r="5.1" fill="#fff"/>
<circle cx="717.2" cy="626" r="4" fill="#3c83f2"/>
</g>
<!-- acrobat (active) -->
<rect x="739" y="608.5" width="35.6" height="36.2" rx="3.2" fill="#6c5e53" stroke="#7a6d62" stroke-width=".7"/>
<rect x="747.1" y="616.6" width="18.7" height="17.7" fill="#2d0b06" stroke="#ee210e" stroke-width="1.5"/>
<path d="M751.4 631.4C754 629 756 625.2 756 621.8C756 620.2 754.4 620.2 754.4 621.8C754.4 625 758.2 628.6 761.2 629C762.8 629.2 762.8 627.6 761.2 627.6C758.2 627.6 753.4 629 751.4 631.4C750.6 632.4 750.8 632 751.4 631.4Z" stroke="#efe6e2" stroke-width="1"/>
<rect x="749.3" y="640.9" width="14.4" height="3.1" rx="1.55" fill="#cfc8ae"/>
<!-- canva -->
<circle cx="796.2" cy="626.1" r="11" fill="url(#gcv)"/>
<text x="796.1" y="628.2" text-anchor="middle" font-family="Liberation Serif, serif" font-style="italic" font-weight="bold" font-size="6.9" fill="#fff" stroke="none" textLength="16.6" lengthAdjust="spacingAndGlyphs">Canva</text>
<rect x="793.8" y="641" width="5.4" height="2.9" rx="1.45" fill="#a8a097"/>
<!-- tray -->
<path d="M918.8 628.8L923.5 624.2L928.2 628.8" stroke="#f4f4f4" stroke-width="1.3"/>
<g stroke="#f4f4f4" stroke-width="1.2">
<path d="M985.4 624.6A9.4 9.4 0 0 1 998.4 624.6M987.6 627A6.2 6.2 0 0 1 996.2 627M989.8 629.3A3.1 3.1 0 0 1 994 629.3"/>
<circle cx="991.9" cy="630.6" r=".9" fill="#f4f4f4" stroke="none"/>
</g>
<g stroke="#f4f4f4" stroke-width="1.1">
<path d="M1006.6 624.4H1008.8L1012.2 621.6V631L1008.8 628.2H1006.6Z"/>
<path d="M1014.4 624.2A3 3 0 0 1 1014.4 628.4"/>
<path d="M1016.4 622.4A5.6 5.6 0 0 1 1016.4 630.2" stroke="#b8aea6"/>
<path d="M1018.4 620.8A8 8 0 0 1 1018.4 631.8" stroke="#8f847b"/>
</g>
<g>
<rect x="1028.6" y="622.2" width="11.8" height="8.6" rx="2" stroke="#f4f4f4" stroke-width="1.1"/>
<rect x="1030.2" y="623.8" width="8.6" height="5.4" rx=".8" fill="#f4f4f4"/>
<path d="M1041.6 625.2V627.8" stroke="#f4f4f4" stroke-width="1.4"/>
</g>
<g fill="#ebe3c3">
<path d="M1127 619.6A1 1 0 0 1 1128 620.5C1130.6 621.2 1131.6 623.2 1131.6 625.8C1131.6 629 1132.2 630 1133.2 631V632H1120.8V631C1121.8 630 1122.4 629 1122.4 625.8C1122.4 623.2 1123.4 621.2 1126 620.5A1 1 0 0 1 1127 619.6Z"/>
<path d="M1125.2 632.8H1128.8A1.8 1.8 0 0 1 1125.2 632.8Z"/>
</g>
</svg>
<div class="t tk" style="left:412.2px;top:621.2px;font-size:12.6px;letter-spacing:-.5px">Search</div>
<div class="t tk" style="left:947.4px;top:622px;font-size:10.7px;letter-spacing:-.55px">ENG</div>
<div class="t tk" style="left:1060px;top:614px;font-size:11px;width:52.8px;text-align:right;letter-spacing:-.4px">0:31</div>
<div class="t tk" style="left:1040px;top:627.8px;font-size:11px;width:72.4px;text-align:right">27/10/2023</div>
</body></html>
